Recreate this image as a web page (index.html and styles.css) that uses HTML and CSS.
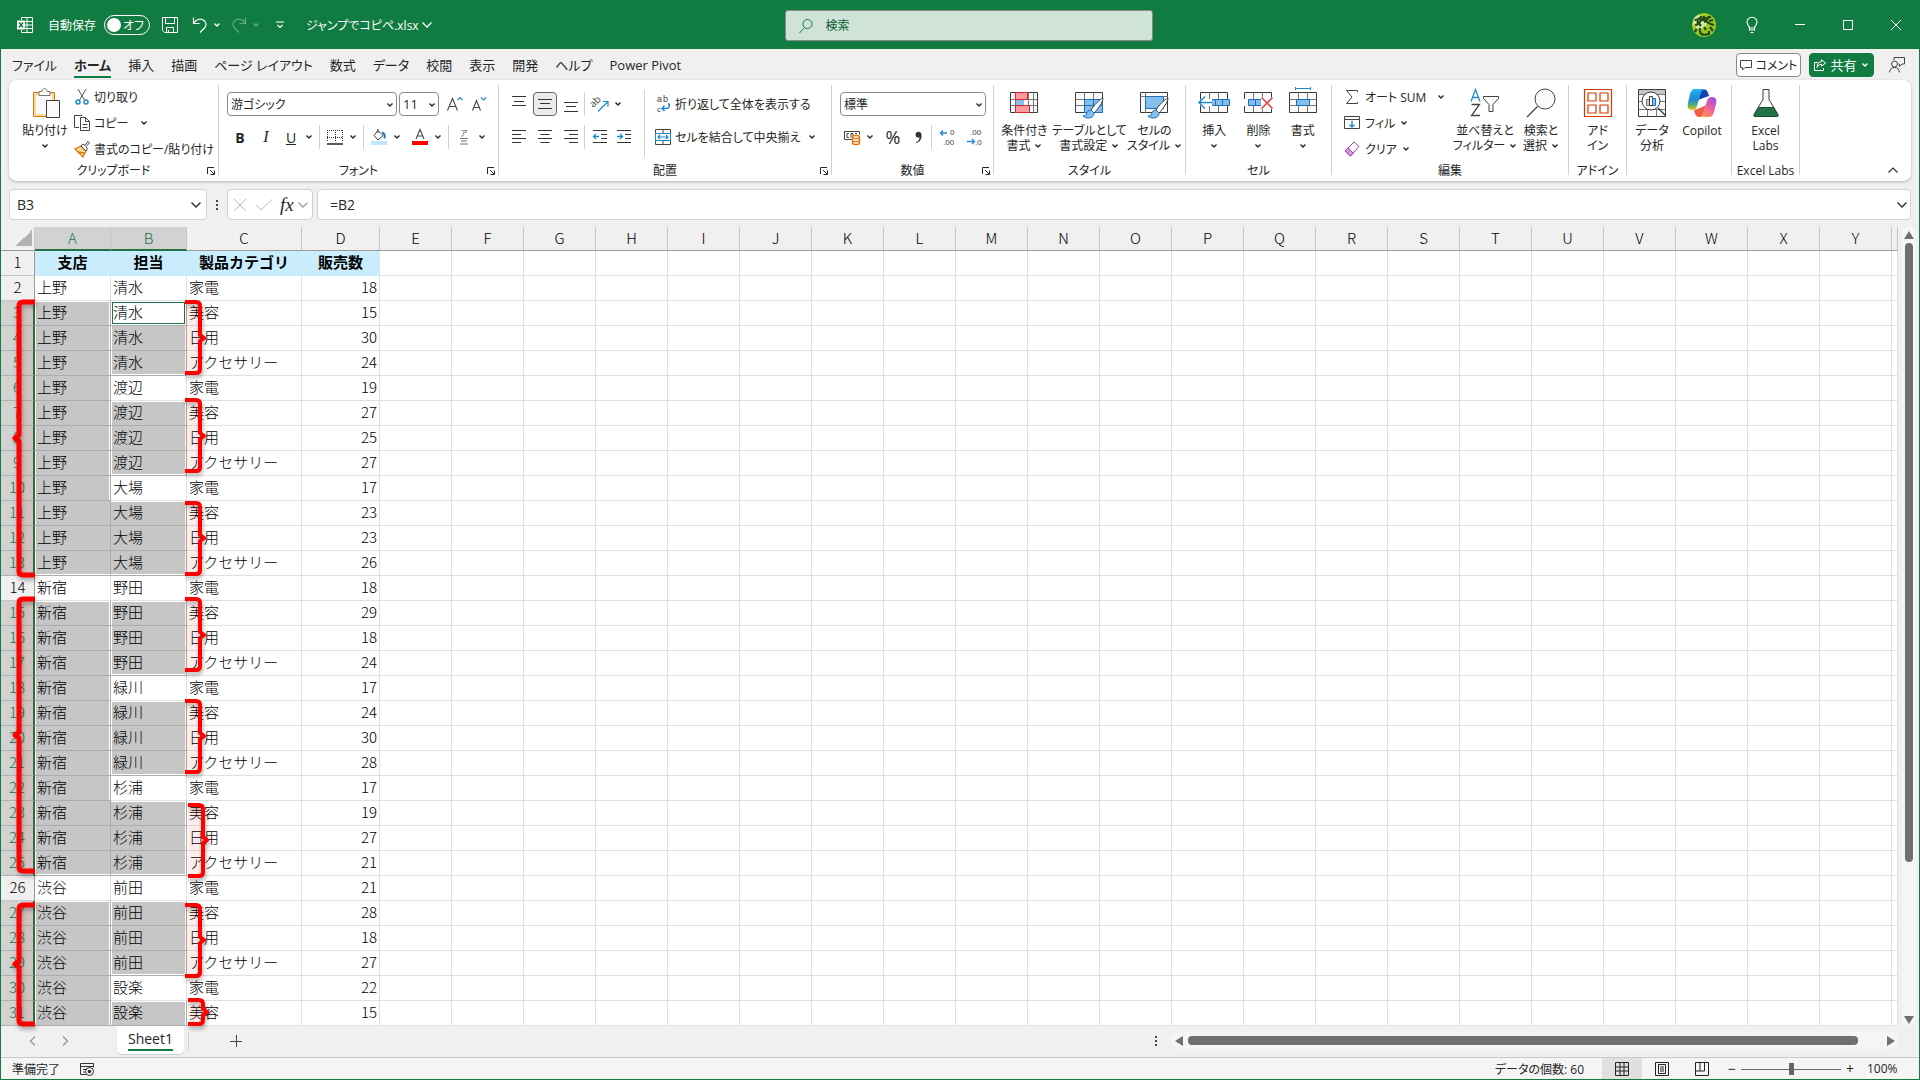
FILE: index.html
```html
<!DOCTYPE html>
<html lang="ja">
  <head>
    <meta charset="UTF-8" />
    <meta name="viewport" content="width=device-width, initial-scale=1.0" />
    <title>ジャンプでコピペ.xlsx - Excel</title>
    <link rel="stylesheet" href="styles.css">
  </head>
  <body>
    <!-- Shared symbols -->
    <svg class="sprite" aria-hidden="true">
      <symbol id="chev" viewBox="0 0 8 8"><path d="M1.5 2.5 4 5l2.5-2.5" fill="none" stroke="currentColor" stroke-width="1.4" /></symbol>
      <symbol id="chev-lg" viewBox="0 0 12 12"><path d="M1.5 3.5 6 8l4.500-4.500" fill="none" stroke="currentColor" stroke-width="1.3" /></symbol>
      <symbol id="launch" viewBox="0 0 8 8"><path d="M.5 7V.5H7M3 3l4 4M7.500 3.500v4h-4" fill="none" stroke="currentColor" /></symbol>
      <symbol id="sheet" viewBox="0 0 32 32">
        <path d="M2.500 5.500h27v20h-27z" fill="#fafafa" stroke="#3b3a39" />
        <path d="M11.500 5.500v20M20.500 5.500v20M2.500 12.500h27M2.500 18.500h27" fill="none" stroke="#797774" />
      </symbol>
      <symbol id="brush" viewBox="0 0 24 24">
        <path d="M22 2c-3 1-9 7-12 12l3 3c4-4 9-11 9-15z" fill="#fff" stroke="#3b3a39" />
        <path d="M10 14c-3 0-4 2-4.500 4-.4 1.500-2 2-3.500 2 3 3 9 2.500 10.500-.5.700-1.200.7-2 .5-2.500z" fill="#83beec" stroke="#1e71b8" />
      </symbol>
    </svg>

    <!-- Title bar -->
    <header class="titlebar">
      <div class="title-left">
        <svg class="i16 app-icon" viewBox="0 0 16 16"><path d="M4.500 3V.5h11v15h-11V13M10 .5v15M4 4.500h11.500M8 8h7.500M4 11.500h11.500" fill="none" stroke="#fff" /><path d="M0 3.500h8v9H0z" fill="#fff" /><path d="m2 5.500 4 5m0-5-4 5" stroke="#107c41" stroke-width="1.500" /></svg>
        <label class="autosave">自動保存
          <span class="switch"><input type="checkbox" /><span class="switch-text">オフ</span></span>
        </label>
        <button class="tb-btn" aria-label="保存"><svg class="i16" viewBox="0 0 16 16"><path d="M.5.5h15v15h-13l-2-2zM3.500.5v6h9v-6M4.500 15.500v-5h7v5M6.500 13v2" fill="none" stroke="#fff" /></svg></button>
        <button class="tb-btn undo" aria-label="元に戻す"><svg class="i16" viewBox="0 0 16 16"><path d="M1.500.5v6h6M1.500 6C5 2 9 .8 12 3.500s2.500 5.500 0 8L8 15.500" fill="none" stroke="#fff" stroke-width="1.200" /></svg><svg class="chev"><use href="#chev" /></svg></button>
        <button class="tb-btn redo" aria-label="やり直し" disabled><svg class="i16" viewBox="0 0 16 16"><path d="M14.500.5v6h-6M14.500 6C11 2 7 .8 4 3.500s-2.500 5.500 0 8l4 4" fill="none" stroke="#fff" stroke-width="1.200" /></svg><svg class="chev"><use href="#chev" /></svg></button>
        <button class="tb-btn" aria-label="クイック アクセス ツール バー"><svg class="chev" viewBox="0 0 8 8"><path d="M0 1h8M1.500 4 4 6.500 6.500 4" fill="none" stroke="#fff" stroke-width="1.200" /></svg></button>
        <button class="tb-btn filename">ジャンプでコピペ.xlsx<svg class="chev-lg"><use href="#chev-lg" /></svg></button>
      </div>
      <div class="search">
        <svg class="i16" viewBox="0 0 16 16"><circle cx="9.500" cy="6" r="4.500" fill="none" stroke="#107c41" /><path d="m6.500 9.500-5 5.500" stroke="#107c41" /></svg>
        <input type="search" placeholder="検索" aria-label="検索" />
      </div>
      <div class="title-right">
        <button class="win-btn" aria-label="アカウント"><svg class="avatar" viewBox="0 0 24 24"><circle cx="12" cy="12" r="12" fill="#9cc522" /><circle cx="8" cy="9" r="7" fill="#d9e8a0" /><path d="M2.500 7c4 0 5.500-1 7-4M3 12.500c3-1 5-3 7-7M12 3l-1.500 5M10 5.500l9-1.500M12 9c3-1 4-3 5-6M12 6c2 3 5 5 10 6M17 8l4-1M5 8l4 5M4.500 16 3 19M8 15c-1 6 2 8 9 6v-3M12 14l2 3M18 14l3 4" fill="none" stroke="#1d4a17" stroke-width="2.200" /></svg></button>
        <button class="win-btn" aria-label="ヒント"><svg class="i16" viewBox="0 0 16 16"><path d="M5.500 11C5.500 9 3 8 3 5.200a5 5 0 0 1 10 0C13 8 10.500 9 10.500 11zM5.500 11v2h5v-2M6.500 15.500h3" fill="none" stroke="#fff" stroke-width="1.100" /></svg></button>
        <button class="win-btn" aria-label="最小化"><svg class="i10" viewBox="0 0 10 10"><path d="M0 4.500h10" stroke="#fff" /></svg></button>
        <button class="win-btn" aria-label="最大化"><svg class="i10" viewBox="0 0 10 10"><path d="M.5.5h9v9h-9z" fill="none" stroke="#fff" /></svg></button>
        <button class="win-btn" aria-label="閉じる"><svg class="i10" viewBox="0 0 10 10"><path d="m0 0 10 10M10 0 0 10" stroke="#fff" /></svg></button>
      </div>
    </header>

    <!-- Ribbon tabs -->
    <nav class="tabs">
      <button>ファイル</button>
      <button class="active">ホーム</button>
      <button>挿入</button>
      <button>描画</button>
      <button>ページ レイアウト</button>
      <button>数式</button>
      <button>データ</button>
      <button>校閲</button>
      <button>表示</button>
      <button>開発</button>
      <button>ヘルプ</button>
      <button>Power Pivot</button>
      <div class="tab-actions">
        <button class="comment"><svg class="i12" viewBox="0 0 12 12"><path d="M.5 1.500h11v7H5l-2.500 2.500V8.500h-2z" fill="none" stroke="#444" /></svg>コメント</button>
        <button class="share"><svg class="i12" viewBox="0 0 12 12"><path d="M4 3.500H.5v8h9V9M7.500.8l4 3.200-4 3.200V5.300C5 5.300 4 6.500 3 8.500c0-3.500 1.500-5.800 4.500-5.800z" fill="none" stroke="#fff" /></svg>共有<svg class="chev"><use href="#chev" /></svg></button>
        <button class="presence" aria-label="共同編集"><svg class="i16" viewBox="0 0 16 16"><circle cx="5.500" cy="7" r="3" fill="none" stroke="#444" /><path d="M.5 15.500c.5-3.500 2-5 5-5s4.500 1.500 5 5M5 3V.5h10.500V7H13l-2.500 2.500V7H9.500" fill="none" stroke="#444" /></svg></button>
      </div>
    </nav>

    <!-- Ribbon -->
    <section class="ribbon">
      <div class="group g-clipboard">
        <div class="group-body">
          <button class="big"><svg class="i32" viewBox="0 0 32 32"><path d="M4.500 5.500h21v24h-21z" fill="#fbd99a" stroke="#d9730d" /><path d="M7 8h16v19H7z" fill="#fafafa" /><path d="M10 8.500v-4h3c0-4 5-4 5 0h3v4z" fill="#fff" stroke="#797774" /><path d="M17.500 13.500h13v17h-13z" fill="#fafafa" stroke="#3b3a39" /></svg><span>貼り付け</span><svg class="chev"><use href="#chev" /></svg></button>
          <div class="stack">
            <button class="small"><svg class="i16" viewBox="0 0 16 16"><path d="m4 0 6.500 11M12 0 5.500 11" stroke="#555" fill="none" /><circle cx="4" cy="13" r="2" fill="none" stroke="#1e8bcd" stroke-width="1.500" /><circle cx="12" cy="13" r="2" fill="none" stroke="#1e8bcd" stroke-width="1.500" /></svg>切り取り</button>
            <button class="small copy"><svg class="i16" viewBox="0 0 16 16"><path d="M5 12.500H.5V.5h8M6.500 2.500h5l4 4v9h-9zM11.500 2.500v4h4M8.500 9.500h5M8.500 12.500h5" fill="none" stroke="#444" /></svg>コピー<svg class="chev"><use href="#chev" /></svg></button>
            <button class="small"><svg class="i16" viewBox="0 0 16 16"><path d="M1 8 7 5l5 5-3 6z" fill="#fbd99a" stroke="#d9730d" stroke-width="1.300" /><path d="m4 11 6 1" stroke="#d9730d" stroke-width="1.500" /><path d="m7 5 2-2 2 1.500 3-4 1.500 1.500-3.500 3.500L13.500 8 12 10z" fill="#fff" stroke="#444" /></svg>書式のコピー/貼り付け</button>
          </div>
        </div>
        <div class="group-label">クリップボード</div>
        <button class="launch" aria-label="クリップボードの設定"><svg><use href="#launch" /></svg></button>
      </div>

      <div class="group g-font">
        <div class="group-body rows">
          <div class="row">
            <div class="combo font-name"><select aria-label="フォント"><option>游ゴシック</option></select><svg class="chev"><use href="#chev" /></svg></div>
            <div class="combo font-size"><select aria-label="フォント サイズ"><option>11</option></select><svg class="chev"><use href="#chev" /></svg></div>
            <button class="ib" aria-label="フォント サイズの拡大"><svg class="i16" viewBox="0 0 16 16"><path d="M.5 14.500 5.500 2.500l5 12M2.500 10.500h6" fill="none" stroke="#444" stroke-width="1.100" /><path d="m10.500 4 2.500-2.500L15.500 4" fill="none" stroke="#1e8bcd" stroke-width="1.200" /></svg></button>
            <button class="ib" aria-label="フォント サイズの縮小"><svg class="i16" viewBox="0 0 16 16"><path d="M1.500 14.500l4-10 4 10M3.500 11.500h4.500" fill="none" stroke="#444" stroke-width="1.100" /><path d="M10 1.500 12.500 4 15 1.500" fill="none" stroke="#1e8bcd" stroke-width="1.200" /></svg></button>
          </div>
          <div class="row">
            <button class="ib wide bold">B</button>
            <button class="ib wide italic">I</button>
            <button class="ib underline">U</button>
            <button class="drop" aria-label="下線の種類"><svg class="chev"><use href="#chev" /></svg></button>
            <span class="sep"></span>
            <button class="ib" aria-label="罫線"><svg class="i16" viewBox="0 0 16 16"><path d="M0 1.500h16M.5 1v12M8.500 1v12M15.500 1v12M0 8.500h16" stroke="#333" stroke-dasharray="1 1" fill="none" /><path d="M0 15h16" stroke="#222" stroke-width="1.500" /></svg></button>
            <button class="drop" aria-label="罫線の種類"><svg class="chev"><use href="#chev" /></svg></button>
            <span class="sep"></span>
            <button class="ib" aria-label="塗りつぶしの色"><svg class="i16" viewBox="0 0 16 16"><path d="m7 1.500 5 5-5 4.500-4-4.500zM7 4V0" fill="none" stroke="#444" /><path d="M11 3.500c2.500 0 3 3 2.500 6" stroke="#1e71b8" stroke-width="2" fill="none" /><path d="M0 12h16v4H0z" fill="#c0e6fa" /></svg></button>
            <button class="drop" aria-label="塗りつぶしの色を選択"><svg class="chev"><use href="#chev" /></svg></button>
            <button class="ib font-color" aria-label="フォントの色"><svg class="i16" viewBox="0 0 16 16"><path d="m4 10 4-9.500L12 10M5.500 7h5" fill="none" stroke="#444" stroke-width="1.100" /><path d="M0 12h16v4H0z" fill="#f00" /></svg></button>
            <button class="drop" aria-label="フォントの色を選択"><svg class="chev"><use href="#chev" /></svg></button>
            <span class="sep"></span>
            <button class="ib" aria-label="ふりがな"><svg class="i16" viewBox="0 0 16 16"><text x="4" y="7" font-size="8" fill="#666">ア</text><path d="M4 9.500h8M5 12h6M4 15h8" fill="none" stroke="#797774" /></svg></button>
            <button class="drop" aria-label="ふりがなの設定"><svg class="chev"><use href="#chev" /></svg></button>
          </div>
        </div>
        <div class="group-label">フォント</div>
        <button class="launch" aria-label="フォントの設定"><svg><use href="#launch" /></svg></button>
      </div>

      <div class="group g-align">
        <div class="group-body">
          <div class="rows">
            <div class="row">
              <button class="ib wide" aria-label="上揃え"><svg class="i16" viewBox="0 0 16 16"><path d="M1 .5h14M3 5.500h10M1 9.500h14" stroke="#333" /></svg></button>
              <button class="ib wide pressed" aria-label="上下中央揃え"><svg class="i16" viewBox="0 0 16 16"><path d="M1 3.500h14M3 7.500h10M1 12.500h14" stroke="#333" /></svg></button>
              <button class="ib wide" aria-label="下揃え"><svg class="i16" viewBox="0 0 16 16"><path d="M1 6.500h14M3 10.500h10M1 15.500h14" stroke="#333" /></svg></button>
              <span class="sep"></span>
              <button class="ib" aria-label="方向"><svg class="i16" viewBox="0 0 16 16"><text x="0" y="11" font-size="10" fill="#444" transform="rotate(-45 2 10)">ab</text><path d="M6 15.500 15.500 6M11 5.500h5v5" fill="none" stroke="#1e8bcd" stroke-width="1.200" /></svg></button>
              <button class="drop" aria-label="方向の種類"><svg class="chev"><use href="#chev" /></svg></button>
            </div>
            <div class="row">
              <button class="ib wide" aria-label="左揃え"><svg class="i16" viewBox="0 0 16 16"><path d="M1 1.500h14M1 5.500h9M1 9.500h14M1 13.500h9" stroke="#333" /></svg></button>
              <button class="ib wide" aria-label="中央揃え"><svg class="i16" viewBox="0 0 16 16"><path d="M1 1.500h14M3.500 5.500h9M1 9.500h14M3.500 13.500h9" stroke="#333" /></svg></button>
              <button class="ib wide" aria-label="右揃え"><svg class="i16" viewBox="0 0 16 16"><path d="M1 1.500h14M6 5.500h9M1 9.500h14M6 13.500h9" stroke="#333" /></svg></button>
              <span class="sep"></span>
              <button class="ib" aria-label="インデントを減らす"><svg class="i16" viewBox="0 0 16 16"><path d="M1 1.500h14M9 5.500h6M9 9.500h6M1 13.500h14" stroke="#333" /><path d="M7 7.500H1.500M4 5 1.500 7.500 4 10" fill="none" stroke="#1e8bcd" stroke-width="1.300" /></svg></button>
              <button class="ib" aria-label="インデントを増やす"><svg class="i16" viewBox="0 0 16 16"><path d="M1 1.500h14M9 5.500h6M9 9.500h6M1 13.500h14" stroke="#333" /><path d="M1 7.500h5.500M4 5l2.500 2.500L4 10" fill="none" stroke="#1e8bcd" stroke-width="1.300" /></svg></button>
            </div>
          </div>
          <div class="rows wrap-col">
            <button class="small"><svg class="i16 tiny" viewBox="0 0 16 16"><text x="2" y="6" font-size="9">a</text><text x="8" y="6" font-size="9">b</text><text x="2" y="16" font-size="8">c</text><path d="M13 7.500c3 1.500 1 5-2 5H7M9.500 9.500 7 12.500l2.500 2.500" fill="none" stroke="#1e8bcd" stroke-width="1.500" /></svg>折り返して全体を表示する</button>
            <button class="small merge"><svg class="i16" viewBox="0 0 16 16"><path d="M.5.5h15v15H.5zM.5 4.500h15M.5 11.500h15M8 .5v4M8 11.500v4" fill="#fff" stroke="#444" /><path d="M.5 4.500h15v7H.500z" fill="#fff" stroke="#1e8bcd" /><path d="M3 8h10M5 6 3 8l2 2M11 6l2 2-2 2" fill="none" stroke="#1e8bcd" stroke-width="1.200" /></svg>セルを結合して中央揃え<svg class="chev"><use href="#chev" /></svg></button>
          </div>
        </div>
        <div class="group-label">配置</div>
        <button class="launch" aria-label="配置の設定"><svg><use href="#launch" /></svg></button>
      </div>

      <div class="group g-number">
        <div class="group-body rows">
          <div class="row">
            <div class="combo number-format"><select aria-label="数値の書式"><option>標準</option></select><svg class="chev"><use href="#chev" /></svg></div>
          </div>
          <div class="row">
            <button class="ib" aria-label="通貨表示形式"><svg class="i16" viewBox="0 0 16 16"><path d="M8 10.500H.5v-8h15v3M5 4.500H3v4h2M7 8.500v-4h2v3M11 4.500h2" fill="none" stroke="#444" /><path d="M8.500 8v6c0 2 7 2 7 0V8c0-2-7-2-7 0z" fill="#fff" stroke="#e8740c" stroke-width="1.400" /><path d="M8.500 8.500c0 1.500 7 1.500 7 0M8.500 11.500c0 1.500 7 1.500 7 0" fill="none" stroke="#e8740c" stroke-width="1.400" /></svg></button>
            <button class="drop" aria-label="通貨の種類"><svg class="chev"><use href="#chev" /></svg></button>
            <button class="ib percent">%</button>
            <button class="ib wide" aria-label="桁区切りスタイル"><svg class="i16" viewBox="0 0 16 16"><path d="M6 14c4-1 6-4 5.500-8.500-.4-4-6-3.500-6 .2C5.500 9 9 9 9.500 8 9.500 11 8 12.500 6 13z" fill="#333" /></svg></button>
            <span class="sep"></span>
            <button class="ib" aria-label="小数点以下の表示桁数を増やす"><svg class="i16 tiny" viewBox="0 0 16 16"><text x="11" y="6" font-size="8">0</text><text x="4" y="16" font-size="8">.00</text><path d="M8 4H1.500M4 1.500 1.500 4 4 6.500" fill="none" stroke="#1e8bcd" stroke-width="1.300" /></svg></button>
            <button class="ib last" aria-label="小数点以下の表示桁数を減らす"><svg class="i16 tiny" viewBox="0 0 16 16"><text x="4" y="6" font-size="8">.00</text><text x="9" y="16" font-size="8">.0</text><path d="M1 12.500h7.500M6 10l2.500 2.500L6 15" fill="none" stroke="#1e8bcd" stroke-width="1.300" /></svg></button>
          </div>
        </div>
        <div class="group-label">数値</div>
        <button class="launch" aria-label="数値の設定"><svg><use href="#launch" /></svg></button>
      </div>

      <div class="group g-style">
        <div class="group-body">
          <button class="big"><svg class="i32" viewBox="0 0 32 32"><use href="#sheet" /><path d="M25.500 5.500v20M7.500 5.500v20" stroke="#797774" /><path d="M8 12h8v7H8z" fill="#83beec" /><path d="M7.500 5.500h12v7h-12zM7.500 18.500h14v7h-14z" fill="#ff9a9e" stroke="#e3242b" /></svg><span>条件付き</span><span>書式 <svg class="chev"><use href="#chev" /></svg></span></button>
          <button class="big"><svg class="i32" viewBox="0 0 32 32"><use href="#sheet" /><path d="M11.500 12.500h18v13h-18z" fill="#83beec" stroke="#1e71b8" /><path d="M20.500 12.500v13M11.500 18.500h18" stroke="#1e71b8" /><use href="#brush" x="8" y="9" width="24" height="24" /></svg><span>テーブルとして</span><span>書式設定 <svg class="chev"><use href="#chev" /></svg></span></button>
          <button class="big"><svg class="i32" viewBox="0 0 32 32"><path d="M2.500 5.500h27v20h-27z" fill="#fafafa" stroke="#3b3a39" /><path d="M2.500 9.500h27M7.500 5.500v20" stroke="#797774" /><path d="M7.500 9.500h18v12h-18z" fill="#83beec" stroke="#1e71b8" /><use href="#brush" x="8" y="9" width="24" height="24" /></svg><span>セルの</span><span>スタイル <svg class="chev"><use href="#chev" /></svg></span></button>
        </div>
        <div class="group-label">スタイル</div>
      </div>

      <div class="group g-cells">
        <div class="group-body">
          <button class="big"><svg class="i32" viewBox="0 0 32 32"><use href="#sheet" /><path d="M10.500 12.500h21v6h-21z" fill="#83beec" stroke="#1e71b8" /><path d="M17.500 12.500v6M24.500 12.500v6" stroke="#1e71b8" /><path d="M14 12H7V8l-7 7.500L7 23v-4h7z" fill="#fff" /><path d="M14 15.500H1M7 9.500l-6 6 6 6" fill="none" stroke="#1e8bcd" stroke-width="1.400" /></svg><span>挿入</span><svg class="chev"><use href="#chev" /></svg></button>
          <button class="big"><svg class="i32" viewBox="0 0 32 32"><use href="#sheet" /><path d="M0 12h7v7H0z" fill="#fff" /><path d="M6.500 12.500h14v6h-14z" fill="#83beec" stroke="#1e71b8" /><path d="M13.500 12.500v6" stroke="#1e71b8" /><path d="M19 10h12v12H19z" fill="#fff" /><path d="m19.500 10.500 11 11m0-11-11 11" stroke="#e8444a" stroke-width="1.600" /></svg><span>削除</span><svg class="chev"><use href="#chev" /></svg></button>
          <button class="big"><svg class="i32" viewBox="0 0 32 32"><use href="#sheet" /><path d="M9.500 12.500h13v6h-13z" fill="#83beec" stroke="#1e71b8" /><path d="M8.500 0v3M23.500 0v3M8.500 1.500h15" stroke="#1e8bcd" /></svg><span>書式</span><svg class="chev"><use href="#chev" /></svg></button>
        </div>
        <div class="group-label">セル</div>
      </div>

      <div class="group g-edit">
        <div class="group-body">
          <div class="stack">
            <button class="small autosum"><svg class="i16" viewBox="0 0 16 16"><path d="M13.500 3V1.500h-11L8 8l-5.500 6.500h11V13" fill="none" stroke="#444" /></svg>オート SUM<svg class="chev"><use href="#chev" /></svg></button>
            <button class="small"><svg class="i16" viewBox="0 0 16 16"><path d="M.5 1.500h15v12H.500zM.5 4.500h15" fill="none" stroke="#444" /><path d="M8 5.500v7M5.500 9.500 8 12l2.500-2.500" fill="none" stroke="#1e8bcd" stroke-width="1.300" /></svg>フィル<svg class="chev"><use href="#chev" /></svg></button>
            <button class="small"><svg class="i16" viewBox="0 0 16 16"><path d="m10 1 5 4.500L6.500 15 1 10z" fill="#fff" stroke="#a33fb5" /><path d="m3.800 7 5.500 5-2.800 3L1 10z" fill="#d59be0" stroke="#a33fb5" /></svg>クリア<svg class="chev"><use href="#chev" /></svg></button>
          </div>
          <button class="big sort"><svg class="i32" viewBox="0 0 32 32"><path d="M2 14.500 6.500 2.500l4.500 12M3.500 10.500h6" fill="none" stroke="#1e8bcd" stroke-width="1.300" /><path d="M2.500 17.500h8L2.500 28.500h8.500" fill="none" stroke="#444" stroke-width="1.300" /><path d="M14.500 9.500h15v2l-5.500 6v7h-4v-7l-5.500-6z" fill="#fafafa" stroke="#444" /></svg><span>並べ替えと</span><span>フィルター <svg class="chev"><use href="#chev" /></svg></span></button>
          <button class="big"><svg class="i32" viewBox="0 0 32 32"><circle cx="20" cy="12" r="10" fill="#fafafa" stroke="#444" /><path d="M12.500 19.500 2 30" stroke="#444" stroke-width="1.300" /></svg><span>検索と</span><span>選択 <svg class="chev"><use href="#chev" /></svg></span></button>
        </div>
        <div class="group-label">編集</div>
      </div>

      <div class="group g-addin">
        <div class="group-body">
          <button class="big"><svg class="i32" viewBox="0 0 32 32"><path d="M2.500 2.500h27v27h-27zM6 6h8v8H6zM18 6h8v8h-8zM6 18h8v8H6zM18 18h8v8h-8z" fill="#fff" stroke="#d83b01" stroke-width="1.200" /></svg><span>アド</span><span>イン</span></button>
        </div>
        <div class="group-label">アドイン</div>
      </div>

      <div class="group g-data">
        <div class="group-body">
          <button class="big"><svg class="i32" viewBox="0 0 32 32"><path d="M2.500 2.500h27v27h-27z" fill="#fafafa" stroke="#3b3a39" /><path d="M3 3h26v4H3z" fill="#c8c6c4" /><path d="M2.500 7.500h27M2.500 14.500h27M2.500 22.500h27M11.500 22.500v7M20.500 22.500v7" stroke="#797774" /><path d="m22 21 8 8" stroke="#3b3a39" stroke-width="1.300" /><circle cx="15" cy="14" r="9" fill="#fff" stroke="#3b3a39" /><path d="M10.500 12.500h3v6h-3z" fill="#c8c6c4" stroke="#797774" /><path d="M13.500 9.500h3v9h-3z" fill="#fff" stroke="#3b3a39" /><path d="M16.500 11.500h3v7h-3z" fill="#83beec" stroke="#1e71b8" /></svg><span>データ</span><span>分析</span></button>
          <button class="big"><svg class="i32" viewBox="0 0 32 32">
            <defs>
              <linearGradient id="cop1" x1="0" y1="0" x2="0" y2="1"><stop offset="0" stop-color="#20b8f0" /><stop offset=".5" stop-color="#1d86d6" /><stop offset=".78" stop-color="#58b56a" /><stop offset="1" stop-color="#f2c20c" /></linearGradient>
              <linearGradient id="cop2" x1=".8" y1="0" x2=".2" y2="1"><stop offset="0" stop-color="#a14be8" /><stop offset=".5" stop-color="#f0619a" /><stop offset="1" stop-color="#ff9a55" /></linearGradient>
            </defs>
            <path d="M8 23c1 4 2 7 5 7h3l4-12-6 3z" fill="#ef6043" />
            <path d="M23 9c-1-4-2-6.500-5-6.500h-3L12 13l8-3z" fill="#173fb2" />
            <path d="M9 2h9c-2 1-3 3-4 7l-3 10c-1 3-2 4-5 4-4 0-5-3-4-7L4 7c1-3 2-5 5-5z" fill="url(#cop1)" />
            <path d="M23 30h-9c2-1 3-3 4-7l3-9c1-3 2-4 5-4 4 0 5 3 4 7l-2 8c-1 3-2 5-5 5z" fill="url(#cop2)" />
          </svg><span>Copilot</span></button>
        </div>
      </div>

      <div class="group g-labs">
        <div class="group-body">
          <button class="big"><svg class="i32" viewBox="0 0 32 32"><path d="M13 2.500h6v10l9 15c.5 1.500 0 2-1 2H5c-1 0-1.500-.5-1-2l9-15z" fill="#fafafa" stroke="#3b3a39" /><path d="M8.500 20.500h15l4 7c.5 1.500 0 2-1 2H5.500c-1 0-1.500-.5-1-2z" fill="#217346" stroke="#1b4d31" /></svg><span>Excel</span><span>Labs</span></button>
        </div>
        <div class="group-label">Excel Labs</div>
      </div>
      <button class="collapse" aria-label="リボンを折りたたむ"><svg class="chev-lg" viewBox="0 0 12 12"><path d="M1.500 8.500 6 4l4.500 4.500" fill="none" stroke="#333" stroke-width="1.200" /></svg></button>
    </section>

    <!-- Formula bar -->
    <section class="formula-bar">
      <div class="name-box"><input type="text" value="B3" aria-label="名前ボックス" /><svg class="chev-lg"><use href="#chev-lg" /></svg></div>
      <span class="dots"></span>
      <div class="fx-box">
        <button aria-label="キャンセル"><svg class="i16" viewBox="0 0 16 16"><path d="m2 2 12 12M14 2 2 14" stroke="#bbb" /></svg></button>
        <button aria-label="入力"><svg class="i16" viewBox="0 0 16 16"><path d="m0 8 5 5L16 2.500" fill="none" stroke="#bbb" /></svg></button>
        <button class="fx">fx</button>
        <svg class="chev-lg"><use href="#chev-lg" /></svg>
      </div>
      <div class="formula"><input type="text" value="=B2" aria-label="数式バー" /><svg class="chev-lg"><use href="#chev-lg" /></svg></div>
    </section>

    <!-- Sheet -->
    <main class="sheet-area">
      <div class="sheet">
        <table class="grid" id="grid"></table>
        <svg class="marks" id="marks"></svg>
      </div>
      <div class="vscroll">
        <svg class="arrow" viewBox="0 0 10 8"><path d="M5 0 10 8H0z" /></svg>
        <div class="vthumb"></div>
        <svg class="arrow" viewBox="0 0 10 8"><path d="M0 0h10L5 8z" /></svg>
      </div>
    </main>

    <div class="sheet-bar">
      <button class="nav-btn" aria-label="前のシート"><svg class="chev-lg" viewBox="0 0 12 12"><path d="M8 1.500 3.500 6 8 10.500" fill="none" stroke="#999" stroke-width="1.300" /></svg></button>
      <button class="nav-btn" aria-label="次のシート"><svg class="chev-lg" viewBox="0 0 12 12"><path d="M4 1.500 8.500 6 4 10.500" fill="none" stroke="#999" stroke-width="1.300" /></svg></button>
      <button class="sheet-tab"><span>Sheet1</span></button>
      <span class="sep"></span>
      <button class="add-sheet" aria-label="新しいシート"><svg class="i12" viewBox="0 0 12 12"><path d="M6.500 0v12M0 6.500h12" stroke="#444" /></svg></button>
      <span class="dots"></span>
      <div class="hscroll">
        <svg class="arrow" viewBox="0 0 8 10"><path d="M8 0v10L0 5z" /></svg>
        <div class="hthumb"></div>
        <svg class="arrow" viewBox="0 0 8 10"><path d="M0 0v10l8-5z" /></svg>
      </div>
    </div>

    <!-- Status bar -->
    <footer class="status-bar">
      <span>準備完了</span>
      <button class="macro" aria-label="マクロの記録"><svg class="i16" viewBox="0 0 16 16"><path d="M7 13.500H1.500v-11h13v4M1.500 5.500h13M4 8.500h4M4 11h2" fill="none" stroke="#333" /><circle cx="10.500" cy="10.500" r="4" fill="none" stroke="#333" /><circle cx="10.500" cy="10.500" r="1.800" fill="#333" /></svg></button>
      <span class="count">データの個数: 60</span>
      <button class="view active" aria-label="標準"><svg class="i14" viewBox="0 0 14 14"><path d="M.5.5h13v13H.5zM5 .5v13M9 .5v13M.5 5h13M.5 9h13" fill="none" stroke="#222" /></svg></button>
      <button class="view" aria-label="ページ レイアウト"><svg class="i14" viewBox="0 0 14 14"><path d="M.5.5h13v13H.5zM3.500 2.500h7v9h-7zM5 5h4M5 7h4M5 9h4" fill="none" stroke="#222" /></svg></button>
      <button class="view" aria-label="改ページ プレビュー"><svg class="i14" viewBox="0 0 14 14"><path d="M.5.5h13v13H.5zM.5 9h9V.5M5 .5V9" fill="none" stroke="#222" /></svg></button>
      <button class="zoom-btn" aria-label="縮小">−</button>
      <input class="zoom" type="range" min="0" max="200" value="100" aria-label="ズーム" />
      <button class="zoom-btn" aria-label="拡大">+</button>
      <span class="zoom-value">100%</span>
    </footer>
    <script src="script.js"></script>
  </body>
</html>
```
FILE: styles.css
```css
* {
  box-sizing: border-box;
}

body {
  margin: 0;
  min-height: 100vh;
  display: flex;
  flex-direction: column;
  background: #f0f0f0;
  border: solid #107c41;
  border-width: 0 1px 1px;
  color: #262626;
  font-family: "Open Sans", "Noto Sans CJK JP", sans-serif;
  font-size: 12px;
  font-feature-settings: "palt";
}

button,
input,
select {
  margin: 0;
  padding: 0;
  border: 0;
  background: none;
  color: inherit;
  font: inherit;
  font-feature-settings: inherit;
  outline: none;
}

button {
  display: flex;
  align-items: center;
  justify-content: center;
  white-space: nowrap;
}

svg {
  flex: none;
  display: block;
  overflow: visible;
}

.sprite {
  position: absolute;
  width: 0;
  height: 0;
}

.i10 { width: 10px; height: 10px; }
.i12 { width: 12px; height: 12px; }
.i14 { width: 14px; height: 14px; }
.i16 { width: 16px; height: 16px; }
.i32 { width: 32px; height: 32px; }
.chev { width: 8px; height: 8px; }
.chev-lg { width: 12px; height: 12px; }

.tiny text {
  font-family: "Liberation Sans", sans-serif;
  fill: #444;
}

/* Title bar */
.titlebar {
  height: 49px;
  margin: 0 -1px;
  padding: 0 0 8px 17px;
  display: grid;
  grid-template-columns: 1fr 368px 1fr;
  align-items: end;
  background: #107c41;
  color: #fff;
}

.title-left,
.title-right {
  display: flex;
  align-items: center;
  height: 32px;
}

.app-icon {
  margin-right: 15px;
}

.autosave {
  display: flex;
  align-items: center;
  gap: 8px;
  margin-right: 12px;
}

.switch {
  position: relative;
}

.switch input {
  appearance: none;
  display: block;
  width: 46px;
  height: 20px;
  border: 1px solid #fff;
  border-radius: 10px;
}

.switch input::before {
  content: "";
  display: block;
  width: 14px;
  height: 14px;
  margin: 2px;
  border-radius: 50%;
  background: #fff;
}

.switch-text {
  position: absolute;
  right: 6px;
  top: 1px;
}

.tb-btn {
  gap: 6px;
  margin-right: 14px;
}

.undo,
.redo {
  gap: 5px;
  margin-right: 10px;
}

.redo {
  opacity: 0.35;
  margin-right: 16px;
}

.filename {
  margin-left: 8px;
  gap: 2px;
}

.search {
  display: flex;
  align-items: center;
  gap: 12px;
  height: 31px;
  padding: 0 12px;
  border: 1px solid #8a8a8a;
  border-radius: 3px;
  background: #cfe3d8;
}

.search input {
  flex: 1;
}

.search input::placeholder {
  color: #0b5c2f;
  opacity: 1;
}

.title-right {
  justify-content: flex-end;
}

.win-btn {
  width: 48px;
  height: 32px;
}

.avatar {
  width: 24px;
  height: 24px;
}

/* Ribbon tabs */
.tabs {
  height: 31px;
  display: flex;
  align-items: center;
  gap: 17px;
  padding: 0 14px 0 11px;
  font-size: 13px;
}

.tabs > button {
  height: 26px;
  border: solid transparent;
  border-width: 2px 0;
}

.tabs > .active {
  border-bottom-color: #107c41;
  font-weight: 700;
}

.tab-actions {
  margin-left: auto;
  display: flex;
  align-items: center;
  gap: 8px;
}

.comment,
.share {
  height: 24px;
  width: 65px;
  gap: 4px;
  border: 1px solid #8a8a8a;
  border-radius: 4px;
  background: #fff;
  font-size: 12px;
}

.share {
  border-color: #107c41;
  background: #107c41;
  color: #fff;
  font-size: 13px;
}

.presence {
  margin-left: 7px;
}

/* Ribbon */
.ribbon {
  height: 101px;
  margin: 0 8px;
  display: flex;
  border-radius: 8px;
  background: #fff;
  box-shadow: 0 1px 3px rgba(0, 0, 0, 0.25);
}

.group {
  position: relative;
  margin: 5px 0 6px;
  border-right: 1px solid #d1d1d1;
  display: flex;
  flex-direction: column;
}

.group-body {
  flex: 1;
  display: flex;
}

.group-label {
  text-align: center;
  line-height: 8px;
}

.g-clipboard { width: 210px; }
.g-font { width: 280px; }
.g-align { width: 333px; }
.g-number { width: 162px; }
.g-style { width: 192px; }
.g-cells { width: 146px; }
.g-edit { width: 237px; }
.g-addin { width: 58px; }
.g-data { width: 105px; }
.g-labs { width: 68px; }

.launch {
  position: absolute;
  right: 3px;
  bottom: 0;
}

.launch svg {
  width: 8px;
  height: 8px;
}

.stack {
  display: flex;
  flex-direction: column;
  gap: 2px;
}

.small {
  height: 24px;
  gap: 5px;
  justify-content: flex-start;
}

.big {
  flex-direction: column;
  justify-content: flex-start;
  padding-top: 2px;
  line-height: 15px;
  text-align: center;
}

.big .i32 {
  margin-bottom: 4px;
}

.big > .chev {
  margin-top: 4px;
}

.big span {
  display: flex;
  align-items: center;
  gap: 4px;
}

.g-clipboard .big {
  width: 56px;
  margin: 0 1px 0 8px;
}

.g-clipboard .stack .small {
  gap: 4px;
}

.copy .chev {
  margin-left: 8px;
}

.rows {
  display: flex;
  flex-direction: column;
  gap: 9px;
  padding: 7px 0 0 7px;
}

.g-font .rows,
.g-number .rows {
  padding-left: 8px;
}

.row {
  display: flex;
  align-items: center;
  height: 24px;
}

.combo {
  position: relative;
  height: 24px;
  margin-right: 2px;
  border: 1px solid #8a8a8a;
  border-radius: 4px;
  background: #fff;
}

.combo select {
  appearance: none;
  width: 100%;
  height: 100%;
  padding-left: 3px;
  color: #262626;
}

.combo .chev {
  position: absolute;
  right: 2px;
  top: 8px;
}

.font-name { width: 170px; }
.font-size { width: 40px; margin-right: 4px; }
.font-size select { font-size: 13px; }
.number-format { width: 146px; }

.ib {
  width: 24px;
  height: 24px;
  font-size: 14px;
}

.wide { width: 26px; }

.pressed {
  width: 24px;
  margin: 0 1px;
  border: 1px solid #666;
  border-radius: 4px;
  background: #ebebeb;
}

.bold { font-weight: 700; }
.italic { font-family: "Liberation Serif", serif; font-style: italic; font-size: 16px; }
.underline { text-decoration: underline; }
.percent { font-size: 18px; margin-left: 5px; }
.font-color { margin-left: 5px; }
.last { margin-left: 3px; }

.drop {
  width: 12px;
  height: 24px;
}

.sep {
  width: 1px;
  height: 24px;
  margin: 0 3px 0 4px;
  background: #d1d1d1;
}

.g-align .row .sep,
.g-number .row .sep {
  margin-left: 0;
}

.g-align .group-body > .rows:first-child {
  width: 145px;
}

.g-align .wrap-col {
  flex: 1;
  margin: 5px 0 10px;
  padding: 2px 0 0 10px;
  border-left: 1px solid #d1d1d1;
}

.wrap-col .small {
  gap: 4px;
}

.merge .chev {
  margin-left: auto;
  margin-right: 15px;
}

.g-style .big { flex: 1; }
.g-style .group-body { padding: 0 3px; }
.g-data .group-body { padding-right: 4px; }
.g-cells .big { flex: 1; }
.g-cells .group-body { padding: 0 6px; }

.g-edit .stack {
  width: 118px;
  padding-left: 12px;
}

.g-edit .autosum .chev {
  margin-left: 6px;
}

.g-edit .sort {
  width: 70px;
}

.g-edit .big:last-child {
  flex: 1;
  padding-right: 6px;
}

.g-addin .big,
.g-labs .big,
.g-data .big {
  flex: 1;
}

.collapse {
  margin: auto 12px 5px auto;
}

/* Formula bar */
.formula-bar {
  display: flex;
  height: 31px;
  margin: 8px 8px 7px;
  font-size: 14px;
}

.name-box,
.fx-box,
.formula {
  display: flex;
  align-items: center;
  border: 1px solid #d1d1d1;
  border-radius: 4px;
  background: #fff;
}

.name-box {
  width: 198px;
  padding: 0 4px 0 7px;
}

.name-box input,
.formula input {
  flex: 1;
  min-width: 0;
}

.dots {
  width: 2px;
  height: 10px;
  margin: auto 9px;
  background: linear-gradient(#444 2px, transparent 2px) 0 0 / 2px 4px;
}

.fx-box {
  width: 86px;
  margin-right: 4px;
  padding: 0 1px 0 4px;
  gap: 8px;
}

.fx-box .chev-lg {
  color: #999;
  margin-left: -5px;
}

.fx {
  font: italic 19px "Liberation Serif", serif;
}

.formula {
  flex: 1;
  padding: 0 2px 0 12px;
}

/* Sheet */
.sheet-area {
  display: flex;
}

.sheet {
  flex: 1;
  position: relative;
}

.grid {
  width: 100%;
  table-layout: fixed;
  border-collapse: separate;
  border-spacing: 0;
  background: #fff;
  color: #000;
  font-family: "Noto Sans CJK JP", sans-serif;
  font-size: 15px;
  font-weight: 300;
  font-feature-settings: normal;
  line-height: 22px;
}

.col-head { width: 34px; }
.col-a { width: 76px; }
.col-c { width: 115px; }
.col-d { width: 78px; }
.col-e { width: 72px; }

.grid th,
.grid td {
  height: 25px;
  padding: 0 2px 2px;
  border: solid #e0e0e0;
  border-width: 0 1px 1px 0;
  white-space: nowrap;
  overflow: hidden;
  text-align: left;
}

.grid thead th {
  height: 24px;
  padding: 0 2px 1px;
  background: #f0f0f0;
  border-color: #9b9b9b;
  border-right-color: #c4c4c4;
  font-weight: 300;
  text-align: center;
}

.grid thead .on {
  padding-bottom: 0;
  background: #d2d2d2;
  color: #217346;
  border-bottom: 2px solid #217346;
}

.corner::after {
  content: "";
  display: block;
  width: 16px;
  height: 16px;
  margin-left: auto;
  background: linear-gradient(135deg, transparent 50%, #b2b2b2 50%);
}

.grid tbody th {
  padding: 0 0 2px;
  background: #f0f0f0;
  border-right-color: #9b9b9b;
  border-bottom-color: #c8c8c8;
  font-weight: 300;
  text-align: center;
}

.grid tbody .on {
  background: #d2d2d2;
  color: #217346;
  border-right: 2px solid #217346;
  border-bottom-color: #b0b0b0;
}

.grid .title {
  background: #c9edfc;
  border-color: #c9edfc;
  font-weight: 700;
  text-align: center;
}

.grid .num {
  text-align: right;
}

.grid .selected {
  background: #c6c6c6;
  border-color: #adadad;
  --t: 0;
  --r: 0;
  --b: 0;
  --l: 0;
  box-shadow:
    inset 0 calc(var(--t) * 1px) #fff,
    inset calc(var(--r) * -1px) 0 #fff,
    inset 0 calc(var(--b) * -1px) #fff,
    inset calc(var(--l) * 1px) 0 #fff;
}

.grid .t { --t: 1; }
.grid .r { --r: 1; }
.grid .b { --b: 1; }
.grid .l { --l: 1; }

.grid .active-cell {
  background: #fff;
  box-shadow: inset 0 0 0 1px #fff, inset 0 0 0 2px #217346;
}

.marks {
  position: absolute;
  inset: 0;
  width: 100%;
  height: 100%;
  pointer-events: none;
}

.bracket {
  fill: rgba(255, 0, 0, 0.06);
  stroke: #f00;
  stroke-width: 4;
  stroke-linejoin: round;
  filter: drop-shadow(1px 3px 2px rgba(0, 0, 0, 0.3));
}

.bracket.left {
  stroke-width: 5;
}

.vscroll {
  width: 14px;
  margin: 0 3px 0 4px;
  padding: 4px 0 2px;
  display: flex;
  flex-direction: column;
  align-items: center;
  border-radius: 7px;
  background: #f6f6f6;
}

.vscroll .arrow {
  width: 10px;
  height: 8px;
}

.arrow {
  fill: #707070;
}

.vthumb {
  width: 8px;
  height: 78%;
  margin: 4px 0 auto;
  border-radius: 4px;
  background: #707070;
}

/* Sheet tabs */
.sheet-bar {
  height: 31px;
  display: flex;
  align-items: center;
  padding: 0 20px 2px 16px;
}

.nav-btn {
  width: 32px;
  height: 24px;
}

.sheet-tab {
  align-self: flex-start;
  height: 28px;
  margin-left: 36px;
  padding: 0 11px;
  border-radius: 0 0 5px 5px;
  background: #fff;
  box-shadow: 0 1px 1px #ccc;
  font-size: 14px;
}

.sheet-tab span {
  border-bottom: 2px solid #107c41;
  line-height: 20px;
}

.sheet-bar .sep {
  height: 18px;
}

.add-sheet {
  width: 32px;
  margin-left: 28px;
}

.sheet-bar .dots {
  margin: 0 14px 0 auto;
}

.hscroll {
  width: 728px;
  height: 17px;
  padding: 0 4px;
  display: flex;
  align-items: center;
  border-radius: 8px;
  background: #f6f6f6;
}

.hscroll .arrow {
  width: 8px;
  height: 10px;
}

.hthumb {
  width: 670px;
  height: 9px;
  margin: 0 auto 0 5px;
  border-radius: 4px;
  background: #707070;
}

/* Status bar */
.status-bar {
  height: 22px;
  display: flex;
  align-items: center;
  padding: 0 18px 0 11px;
  border-top: 1px solid #c8c8c8;
  background: #f5f5f5;
}

.macro {
  margin-left: 19px;
}

.count {
  margin-left: auto;
  margin-right: 18px;
}

.view {
  width: 40px;
  height: 21px;
}

.view.active {
  background: #e0e0e0;
}

.zoom-btn {
  width: 14px;
  height: 20px;
  font-size: 14px;
}

.view + .zoom-btn {
  margin-left: 3px;
}

.zoom {
  appearance: none;
  width: 100px;
  height: 12px;
  margin: 0 2px;
  background: linear-gradient(#666, #666) 0 6px / 100% 1px no-repeat;
}

.zoom::-webkit-slider-thumb {
  appearance: none;
  width: 5px;
  height: 12px;
  background: #666;
}

.zoom-value {
  width: 34px;
  margin-left: 10px;
}
```
FILE: script.js
```js
const columns = "ABCDEFGHIJKLMNOPQRSTUVWXY".split("");
const categories = ["家電", "美容", "日用", "アクセサリー"];

// branch, person, sales per category
const people = [
  ["上野", "清水", [18, 15, 30, 24]],
  ["上野", "渡辺", [19, 27, 25, 27]],
  ["上野", "大場", [17, 23, 23, 26]],
  ["新宿", "野田", [18, 29, 18, 24]],
  ["新宿", "緑川", [17, 24, 30, 28]],
  ["新宿", "杉浦", [17, 19, 27, 21]],
  ["渋谷", "前田", [21, 28, 18, 27]],
  ["渋谷", "設楽", [22, 15]],
];

const rows = [["支店", "担当", "製品カテゴリ", "販売数"]];
people.forEach(([branch, person, sales]) => {
  sales.forEach((n, i) => rows.push([branch, person, categories[i], n]));
});

function isSelected(r, c) {
  if (r < 3 || r > 31) return false;
  if (c === 0) return r !== 14 && r !== 26;
  if (c === 1) return (r - 2) % 4 !== 0;
  return false;
}

// rows where A and B are selected as one block
const joined = [11, 12, 13, 23, 24, 25];

function cellClass(r, c) {
  if (r === 1) return c < 4 ? "title" : "";
  if (!isSelected(r, c)) return c === 3 ? "num" : "";
  const list = ["selected"];
  if (!isSelected(r - 1, c)) list.push("t");
  if (!isSelected(r + 1, c) && r < 31) list.push("b");
  if (c === 1 || !joined.includes(r)) list.push("r");
  if (c === 0 || !joined.includes(r)) list.push("l");
  if (r === 3 && c === 1) list.push("active-cell");
  return list.join(" ");
}

let html = '<colgroup><col class="col-head"><col class="col-a"><col class="col-a"><col class="col-c"><col class="col-d">';
html += '<col class="col-e">'.repeat(21) + "<col></colgroup>";
html += '<thead><tr><th class="corner"></th>';
columns.forEach((name, i) => {
  html += `<th class="${i < 2 ? "on" : ""}">${name}</th>`;
});
html += "<th></th></tr></thead><tbody>";
rows.forEach((row, i) => {
  const r = i + 1;
  html += `<tr><th class="${isSelected(r, 0) ? "on" : ""}">${r}</th>`;
  for (let c = 0; c < 26; c++) {
    html += `<td class="${cellClass(r, c)}">${row[c] ?? ""}</td>`;
  }
  html += "</tr>";
});
document.getElementById("grid").innerHTML = html + "</tbody>";

// Brackets: x, top, bottom, nib y (sheet coordinates)
const left = [[75, 348, 211], [372, 644, 508], [678, 797, 737]];
const right = [
  [184, 75, 146, 111],
  [184, 173, 244, 209],
  [184, 276, 347, 311],
  [184, 372, 443, 408],
  [184, 474, 545, 509],
  [187, 578, 649, 613],
  [184, 678, 749, 713],
  [187, 773, 797, 785],
];
let marks = "";
left.forEach(([t, b, n]) => {
  marks += `<path class="bracket left" d="M34 ${t}H22q-4 0-4 4V${n - 3}l-4 3 4 3V${b - 4}q0 4 4 4H34" />`;
});
right.forEach(([x, t, b, n]) => {
  marks += `<path class="bracket" d="M${x} ${t}h11q4 0 4 4V${n - 3}l4 3-4 3V${b - 4}q0 4-4 4h-11" />`;
});
document.getElementById("marks").innerHTML = marks;
```
